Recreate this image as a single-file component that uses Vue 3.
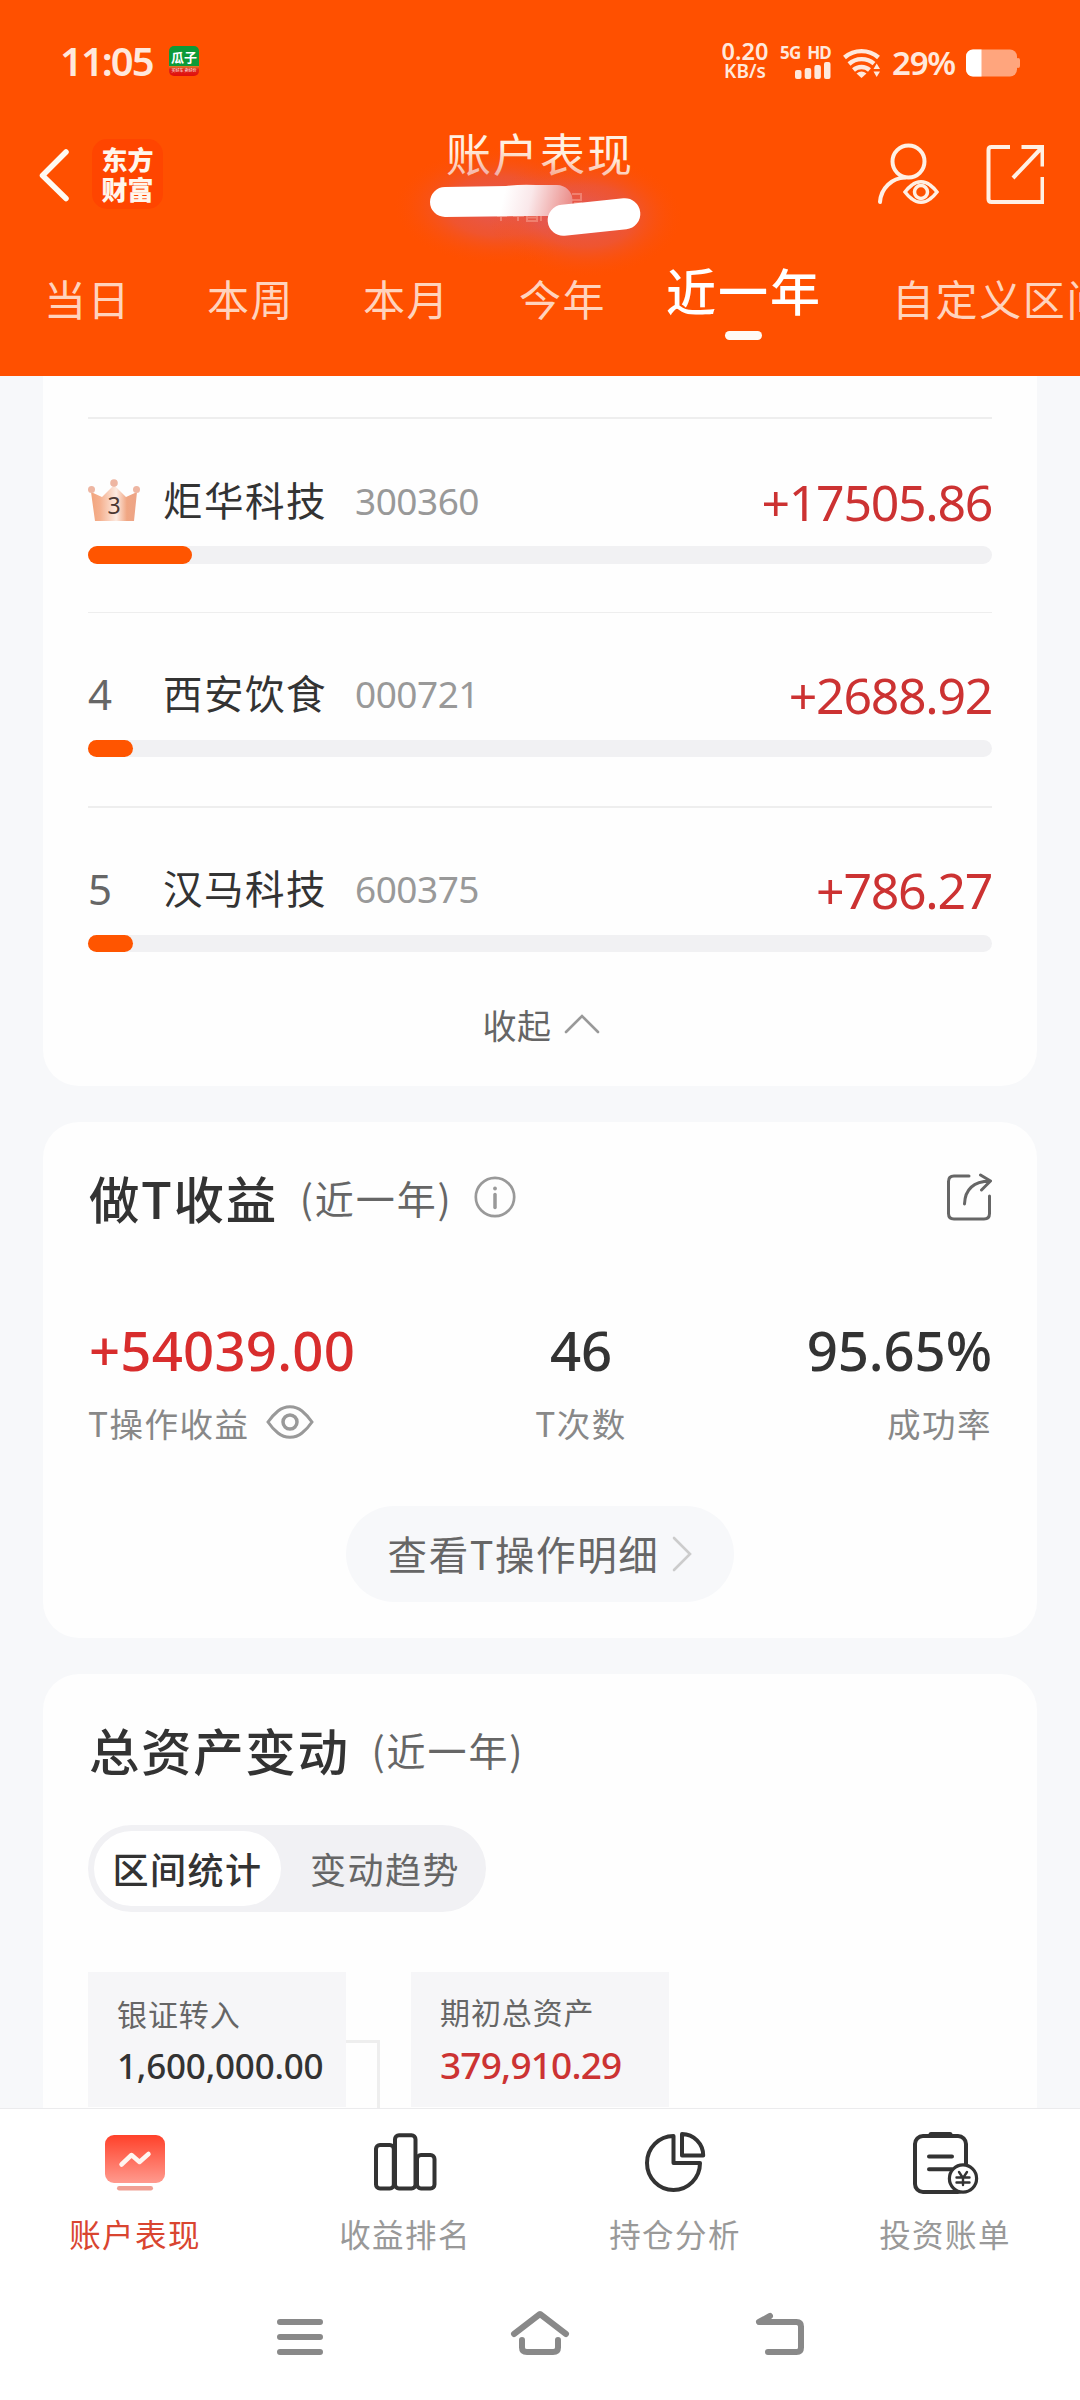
<script setup>
const tabs = ['当日', '本周', '本月', '今年', '近一年', '自定义区间']
const activeTab = 4

const holdings = [
  { rank: 3, name: '炬华科技', code: '300360', profit: '+17505.86', width: 104 },
  { rank: 4, name: '西安饮食', code: '000721', profit: '+2688.92', width: 45 },
  { rank: 5, name: '汉马科技', code: '600375', profit: '+786.27', width: 45 },
]
</script>

<template>
  <div class="page">
    <header class="header">
      <div class="status">
        <span class="clock">11:05</span>
        <span class="app-badge"><b>瓜子</b><i>买好车 卖好价</i></span>
        <span class="status-space"></span>
        <span class="speed"><b>0.20</b><i>KB/s</i></span>
        <span class="signal">
          <b>5G HD</b>
          <svg width="36" height="17" viewBox="0 0 36 17" fill="#ffe8dc">
            <rect x="0" y="8" width="6.5" height="9" rx="2" /><rect x="9.7" y="6" width="6.5" height="11" rx="2" />
            <rect x="19.4" y="3" width="6.5" height="14" rx="2" /><rect x="29" y="0" width="6.5" height="17" rx="2" />
          </svg>
        </span>
        <svg class="wifi" width="38" height="30" viewBox="0 0 38 30" fill="none" stroke="#ffe8dc" stroke-width="4.4">
          <path d="M1.5 9.5a26 26 0 0 1 34 0" /><path d="M6 16a19 19 0 0 1 25-.3" /><path d="M10.500 22a12 12 0 0 1 16 0" />
          <path d="M13.500 25.500l5 4.500 5-4.500q-5-4-10 0z" fill="#ffe8dc" stroke="none" />
          <path d="M30.500 21l3.200-5.500L37 21zM30.500 23.500l3.200 5.500 3.300-5.500z" fill="#ffe8dc" stroke="none" />
        </svg>
        <span class="percent">29%</span>
        <svg class="battery" width="54" height="28" viewBox="0 0 54 28">
          <rect x="50" y="9" width="4" height="10" rx="2" fill="#ffa57d" />
          <rect x="0" y="0.500" width="51" height="27" rx="7" fill="#ffa57d" />
          <path d="M15.500.5V27.500H7a7 7 0 0 1-7-7V7.500a7 7 0 0 1 7-7z" fill="#fff" />
        </svg>
      </div>

      <div class="title-bar">
        <svg class="back" width="32" height="54" viewBox="0 0 32 54" fill="none" stroke="#fffaf2" stroke-width="5.500" stroke-linecap="round" stroke-linejoin="round">
          <path d="M28 4L4.500 27.500l23.500 23" />
        </svg>
        <div class="brand"><span>东方</span><span>财富</span></div>
        <h1>账户表现</h1>
        <svg class="scribble" width="340" height="180" viewBox="370 110 340 180">
          <defs>
            <radialGradient id="glow">
              <stop offset="0" stop-color="#d85c78" stop-opacity=".75" />
              <stop offset=".5" stop-color="#dc5a68" stop-opacity=".45" />
              <stop offset="1" stop-color="#ff5000" stop-opacity="0" />
            </radialGradient>
            <linearGradient id="brush" gradientUnits="userSpaceOnUse" x1="505" y1="190" x2="570" y2="205">
              <stop offset="0" stop-color="#fff" />
              <stop offset=".4" stop-color="#fae8ea" />
              <stop offset="1" stop-color="#eb8f8b" />
            </linearGradient>
          </defs>
          <ellipse cx="500" cy="206" rx="108" ry="60" fill="url(#glow)" />
          <ellipse cx="586" cy="216" rx="98" ry="62" fill="url(#glow)" />
          <g fill="none" stroke="#f0806f" stroke-width="2">
            <path d="M497 216h10M501 216v5M513 216h11M518 216v5M527 214v7h10v-7M527 217.500h10M541 212v9M546 213h8M572 194h9v6h-9M574 203h8" />
          </g>
          <path d="M445 187l61-1q16-2 30-1h21a15.500 15.500 0 0 1 0 31h-31l-81 1a15 15 0 0 1 0-30z" fill="url(#brush)" />
          <rect x="547.500" y="201.500" width="93" height="31" rx="15.500" fill="#fff" transform="rotate(-6 594 217)" />
        </svg>
        <span class="bar-space"></span>
        <svg class="account" width="62" height="68" viewBox="878 142 62 68" fill="none" stroke="#fff0e4" stroke-width="4" stroke-linecap="round">
          <circle cx="909.500" cy="161.500" r="16" />
          <path d="M881 202c1-14 12-24 25-24.500" />
          <path d="M906 192q3-4 7-7a14 14 0 0 1 18 0q4 3 7 7-3 4-7 7a14 14 0 0 1-18 0q-4-3-7-7z" stroke-width="3.500" />
          <circle cx="922" cy="192" r="6.500" stroke-width="3.500" />
        </svg>
        <svg class="open" width="58" height="60" viewBox="0 0 58 60" fill="none" stroke="#fff0e4" stroke-width="4">
          <path d="M24 3H5.500q-3 0-3 3v49q0 3 3 3h51V33" />
          <path d="M35.500 3H56.500v19.500M55.500 4L27 34" />
        </svg>
      </div>

      <nav class="tabs">
        <span v-for="(tab, i) in tabs" :key="tab" :class="{ active: i === activeTab }">{{ tab }}</span>
      </nav>
    </header>

    <main class="content">
      <section class="card ranking">
        <article v-for="h in holdings" :key="h.code" class="holding" :class="'rank-' + h.rank">
          <div class="line">
            <div class="rank">
              <svg v-if="h.rank === 3" width="52" height="43" viewBox="0 0 52 43">
                <defs>
                  <linearGradient id="bronze" x1="0" x2="1">
                    <stop offset="0" stop-color="#f2a47c" /><stop offset=".2" stop-color="#f5b190" />
                    <stop offset=".55" stop-color="#fdeae0" /><stop offset=".78" stop-color="#f0a683" /><stop offset="1" stop-color="#eda487" />
                  </linearGradient>
                </defs>
                <path d="M3 13l11 5L26 6l12 12 11-5-3 29H7z" fill="url(#bronze)" />
                <g fill="#eeb6a2"><circle cx="3.500" cy="10.500" r="3.500" /><circle cx="26" cy="4" r="3.800" /><circle cx="48.500" cy="10.500" r="3.500" /></g>
                <text x="26" y="35" text-anchor="middle" font-size="23" font-family="Noto Sans, sans-serif" fill="#4b3832">3</text>
              </svg>
              <template v-else>{{ h.rank }}</template>
            </div>
            <span class="name">{{ h.name }}</span>
            <span class="code">{{ h.code }}</span>
            <span class="profit">{{ h.profit }}</span>
          </div>
          <div class="track"><div class="fill" :style="{ width: h.width + 'px' }"></div></div>
        </article>
        <div class="collapse">
          <span>收起</span>
          <svg width="36" height="22" viewBox="0 0 36 22" fill="none" stroke="#999" stroke-width="2.600" stroke-linecap="round"><path d="M2 19L18 3l16 16" /></svg>
        </div>
      </section>

      <section class="card t-card">
        <div class="heading">
          <h2>做T收益</h2><span class="period">(近一年)</span>
          <svg class="info" width="42" height="42" viewBox="0 0 42 42" fill="none" stroke="#999" stroke-width="2.700" stroke-linecap="round">
            <circle cx="21" cy="21" r="19.200" /><path d="M21 18.500v13" stroke-width="3.500" /><circle cx="21" cy="12.500" r="1.900" fill="#999" stroke="none" />
          </svg>
          <svg class="share" width="46" height="48" viewBox="0 0 46 48" fill="none" stroke="#666" stroke-width="3" stroke-linecap="round" stroke-linejoin="round">
            <path d="M23 3H8Q2.500 3 2.500 8.500v32Q2.500 46 8 46h30q5.500 0 5.500-5.500V23" />
            <path d="M18.500 31C19 17 27 8.500 44 8M34.500 2l10 6-9 9" />
          </svg>
        </div>
        <div class="stats">
          <div class="stat">
            <strong class="up">+54039.00</strong>
            <div class="label">T操作收益
              <svg width="48" height="36" viewBox="0 0 48 36" fill="none" stroke="#999" stroke-width="3">
                <path d="M2 18Q6 12 12 7a19 19 0 0 1 24 0q6 5 10 11-4 6-10 11a19 19 0 0 1-24 0Q6 24 2 18z" /><circle cx="24" cy="18" r="7" stroke-width="3.500" />
              </svg>
            </div>
          </div>
          <div class="stat middle"><strong>46</strong><div class="label">T次数</div></div>
          <div class="stat last"><strong>95.65%</strong><div class="label">成功率</div></div>
        </div>
        <div class="detail">
          <span>查看T操作明细</span>
          <svg width="20" height="36" viewBox="0 0 20 36" fill="none" stroke="#ccc" stroke-width="2.600" stroke-linecap="round"><path d="M2 2l16 16L2 34" /></svg>
        </div>
      </section>

      <section class="card asset-card">
        <div class="heading"><h2>总资产变动</h2><span class="period">(近一年)</span></div>
        <div class="segment"><span class="on">区间统计</span><span class="off">变动趋势</span></div>
        <div class="flow">
          <div class="box"><span>银证转入</span><b>1,600,000.00</b></div>
          <div class="elbow"></div>
          <div class="box start"><span>期初总资产</span><b class="up">379,910.29</b></div>
        </div>
      </section>
    </main>

    <footer class="bottom-nav">
      <div class="nav-item current">
        <svg width="72" height="64" viewBox="99 2131 72 64">
          <defs><linearGradient id="screen" x1="0" x2="0" y1="0" y2="1"><stop offset="0" stop-color="#ff412a" /><stop offset="1" stop-color="#ff9a8e" /></linearGradient></defs>
          <rect x="105" y="2135" width="60" height="48" rx="9" fill="url(#screen)" />
          <rect x="117" y="2186" width="36" height="4.500" rx="2.200" fill="#f0a094" />
          <path d="M121.500 2164.500l10-9.500 8 7 9-8" fill="none" stroke="#fff5f0" stroke-width="4.500" stroke-linecap="round" stroke-linejoin="round" />
        </svg>
        <span>账户表现</span>
      </div>
      <div class="nav-item">
        <svg width="72" height="64" viewBox="369 2131 72 64" fill="none" stroke="#333" stroke-width="4">
          <rect x="376" y="2145" width="17.800" height="43.500" rx="4" /><rect x="395" y="2135.300" width="20.500" height="53.200" rx="4" /><rect x="417" y="2155" width="17.500" height="33.500" rx="4" />
        </svg>
        <span>收益排名</span>
      </div>
      <div class="nav-item">
        <svg width="72" height="64" viewBox="639 2131 72 64" fill="none" stroke="#333" stroke-width="4" stroke-linejoin="round">
          <path d="M673.500 2136v27H700a26.500 27 0 1 1-26.500-27z" /><path d="M682 2134v21.500h21.200A21.500 21.500 0 0 0 682 2134z" />
        </svg>
        <span>持仓分析</span>
      </div>
      <div class="nav-item">
        <svg width="72" height="64" viewBox="909 2131 72 64" fill="none" stroke="#333" stroke-width="4" stroke-linecap="round">
          <rect x="915" y="2136" width="51" height="56" rx="8" /><path d="M931 2134.500h19" stroke-width="5" /><path d="M929 2156.500h23M929 2169.300h23" />
          <circle cx="963" cy="2178.500" r="13.600" fill="#fff" stroke-width="3.200" />
          <path d="M959 2172l4 6 4-6M963 2178v7M956.500 2177.500h13M956.500 2182.500h13" stroke-width="2.400" />
        </svg>
        <span>投资账单</span>
      </div>
    </footer>

    <div class="system-nav">
      <svg width="1080" height="120" viewBox="0 2280 1080 120" fill="none" stroke="#898989" stroke-width="6" stroke-linecap="round" stroke-linejoin="round">
        <path d="M280 2322h40M280 2337h40M280 2352h40" />
        <path d="M514 2334l26-20 26 20M522 2340v7.500q0 4.500 5 4.500h26q5 0 5-4.500V2340" />
        <path d="M770 2316l-11 6h37.500q4.500 0 4.500 4.500v21q0 4.500-4.500 4.500H768" />
      </svg>
    </div>
  </div>
</template>

<style>
body { margin: 0; background: #fff; }
</style>

<style scoped>
.page { width: 1080px; height: 2400px; display: flex; flex-direction: column; overflow: hidden; background: #f7f8fa; color: #333; font-family: "Noto Sans CJK SC", sans-serif; }
svg { display: block; flex: none; }
h1, h2 { margin: 0; }
i { font-style: normal; }

.header { height: 376px; flex: none; background: #ff5000; color: #ffe8dc; }
.status { height: 122px; display: flex; align-items: center; padding: 0 60px 0 60px; font-family: "Noto Sans", sans-serif; white-space: nowrap; }
.clock { width: 109px; font-size: 40px; font-weight: 600; letter-spacing: -2px; line-height: 40px; }
.app-badge { width: 30px; height: 30px; border-radius: 5px; overflow: hidden; background: linear-gradient(#0d9a38 66%, #e0802a 67%, #e0261a 78%, #e00d0d); display: flex; flex-direction: column; align-items: center; color: #fff; font-family: "Noto Sans CJK SC", sans-serif; }
.app-badge b { font-size: 13px; line-height: 22px; height: 22px; }
.app-badge i { font-size: 4px; line-height: 5px; }
.status-space, .bar-space { flex: 1; }
.speed { width: 48px; display: flex; flex-direction: column; align-items: center; margin-right: 13px; font-weight: 600; }
.speed b { font-size: 23.500px; line-height: 20px; font-weight: 600; letter-spacing: 0; }
.speed i { font-size: 19px; line-height: 20px; }
.signal { width: 49px; display: flex; flex-direction: column; align-items: flex-end; margin-right: 12px; }
.signal b { font-size: 17px; line-height: 18px; font-weight: 700; letter-spacing: -.8px; word-spacing: 3px; }
.wifi { margin: 3px 11px 0 0; }
.percent { width: 66px; font-size: 33px; line-height: 34px; font-weight: 600; letter-spacing: -1.200px; margin: 4px 8px 0 0; }
.battery { margin-top: 3px; }

.title-bar { height: 132px; display: flex; align-items: flex-start; position: relative; padding: 0 36px 0 38px; }
.back { margin: 26px 22px 0 0; }
.brand { width: 71px; height: 70px; border-radius: 15px; margin-top: 17px; background: #ff4500; color: #fff6ec; display: flex; flex-direction: column; align-items: center; justify-content: center; font-size: 26px; line-height: 30px; font-weight: 900; }
h1 { position: absolute; left: 0; right: 0; top: 4px; text-align: center; font-size: 45px; line-height: 54px; font-weight: 400; letter-spacing: 2px; color: #fff0e2; }
.scribble { position: absolute; left: 370px; top: -12px; }
.account { margin: 20px 47px 0 0; }
.open { margin-top: 22px; }

.tabs { display: grid; grid-template-columns: 163px 156px 156px 148px 225px 240px; padding-left: 44px; height: 122px; color: #ffd3bd; overflow: hidden; }
.tabs span { font-size: 42px; line-height: 60px; letter-spacing: 1.600px; padding-top: 14px; white-space: nowrap; }
.tabs .active { font-size: 50px; font-weight: 500; letter-spacing: 2px; color: #fff; padding-top: 5px; width: 154px; display: flex; flex-direction: column; align-items: center; }
.tabs .active::after { content: ""; width: 37px; height: 9px; border-radius: 5px; background: #fffaf5; margin: 12px 2px 0 0; }

.content { flex: 1; min-height: 0; overflow: hidden; display: flex; flex-direction: column; gap: 36px; padding: 0 43px; }
.card { box-sizing: border-box; flex: none; background: #fefefe; border-radius: 36px; padding: 0 45px; }
.ranking { height: 710px; border-radius: 0 0 36px 36px; padding-top: 41px; }
.holding { height: 195px; border-top: 2px solid #eee; box-sizing: border-box; }
.rank-4 { height: 194px; border-top-width: 1px; }
.rank-5 { height: 194px; }
.line { display: flex; align-items: center; height: 60px; padding-top: 51px; }
.rank-4 .line, .rank-5 .line { padding-top: 50px; }
.rank { width: 75px; font: 42px/60px "Noto Sans", sans-serif; color: #666; margin-top: 2px; }
.rank svg { margin-top: -2px; }
.name { width: 192px; font-size: 39.500px; letter-spacing: 1.500px; white-space: nowrap; margin-top: -4px; }
.code { font: 37px/60px "Noto Sans", sans-serif; color: #999; letter-spacing: -.5px; margin-top: 1px; }
.profit { margin-left: auto; font: 50px/60px "Noto Sans", sans-serif; color: #cc3232; letter-spacing: -1.300px; margin-top: 3px; }
.track { margin-top: 16px; height: 18px; border-radius: 9px; background: #f1f1f3; }
.rank-4 .track, .rank-5 .track { margin-top: 17px; height: 17px; }
.fill { height: 100%; border-radius: 9px; background: #ff5500; }
.collapse { display: flex; justify-content: center; align-items: center; gap: 12px; font-size: 34px; line-height: 50px; letter-spacing: .5px; color: #666; margin-left: 2px; }
.collapse svg { margin-top: -3px; }

.heading { display: flex; align-items: center; height: 58px; padding-bottom: 2px; }
h2 { font-size: 50.500px; line-height: 60px; font-weight: 500; letter-spacing: 1.600px; margin: 0 22px 0 1px; }
.period { font-size: 39px; line-height: 60px; letter-spacing: 1.900px; color: #666; }
.t-card { height: 516px; padding-top: 46px; }
.info { margin-left: 21px; }
.share { margin-left: auto; }
.stats { display: flex; justify-content: space-between; margin-top: 90px; }
.stat { width: 300px; }
.stat strong { display: block; font: 500 54.500px/64px "Noto Sans", sans-serif; letter-spacing: -.1px; }
.up, .stat .up { color: #d82d2d; }
.stat .up { letter-spacing: .2px; padding-left: 1px; }
.label { display: flex; align-items: center; gap: 16px; font-size: 33.500px; line-height: 50px; letter-spacing: 1.500px; color: #888; margin-top: 16px; white-space: nowrap; }
.label svg { margin-top: -3px; }
.middle { display: flex; flex-direction: column; align-items: center; margin-left: 82px; }
.last { display: flex; flex-direction: column; align-items: flex-end; }
.detail { width: 388px; height: 96px; margin: 58px auto 0; border-radius: 48px; background: #f7f8fa; display: flex; align-items: center; justify-content: center; gap: 13px; font-size: 39.500px; letter-spacing: 1.600px; color: #666; }
.detail span { margin-top: -3px; }

.asset-card { height: 560px; padding-top: 46px; }
.segment { width: 398px; height: 87px; box-sizing: border-box; margin-top: 45px; padding: 6px; border-radius: 44px; background: #f1f1f4; display: flex; font-size: 36px; line-height: 75px; letter-spacing: 1.500px; }
.segment .on { width: 187px; border-radius: 38px; background: #fff; font-weight: 500; text-align: center; }
.segment .off { flex: 1; padding-left: 29px; color: #666; }
.flow { display: flex; margin-top: 60px; }
.box { box-sizing: border-box; width: 258px; height: 134.500px; padding: 19px 0 0 29px; background: #f6f6f8; display: flex; flex-direction: column; }
.box span { font-size: 30px; line-height: 44px; letter-spacing: .9px; color: #666; }
.box b { font: 500 35px/46px "Noto Sans", sans-serif; letter-spacing: -.2px; margin-top: 8px; }
.start { padding-top: 17px; }
.start b { font-size: 37px; letter-spacing: -.8px; margin-top: 9px; color: #cc3333; }
.elbow { box-sizing: border-box; width: 34px; height: 140px; margin: 68px 31px 0 0; border: solid #eee; border-width: 3px 3px 0 0; }

.bottom-nav { flex: none; height: 172px; box-sizing: border-box; border-top: 1px solid #ebebed; background: #fff; display: flex; }
.nav-item { width: 270px; display: flex; flex-direction: column; align-items: center; padding-top: 22px; font-size: 31.500px; line-height: 46px; letter-spacing: 1.400px; color: #999; }
.nav-item span { margin-top: 15px; }
.current { color: #d94530; }
.system-nav { flex: none; height: 120px; background: #fff; }
</style>
